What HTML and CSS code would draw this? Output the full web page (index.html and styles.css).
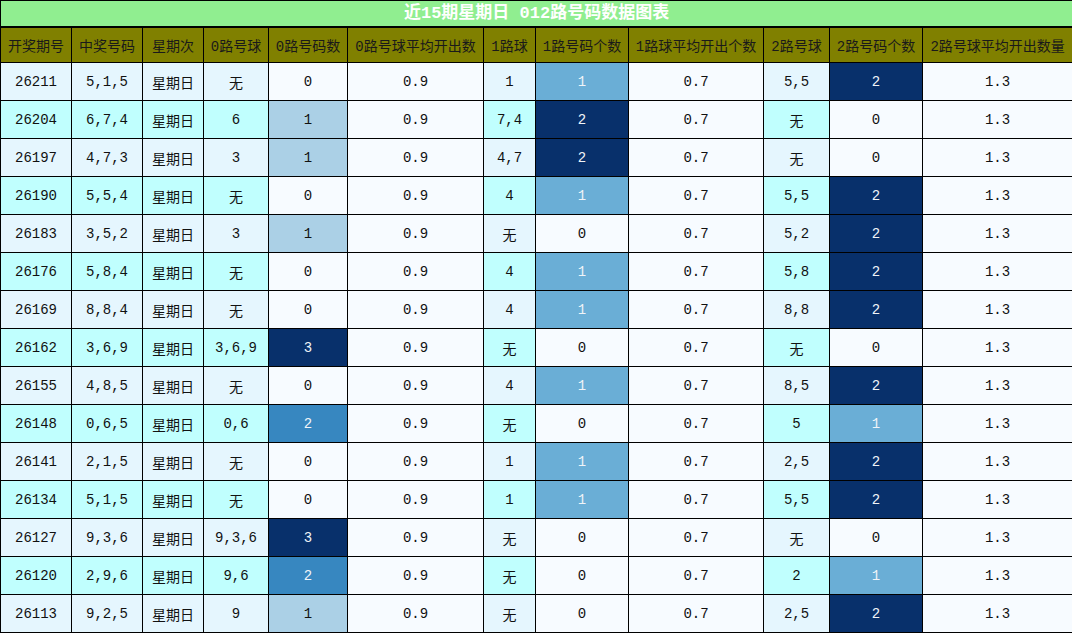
FILE: index.html
```html
<!DOCTYPE html>
<html lang="zh">
<head>
<meta charset="utf-8">
<title>近15期星期日 012路号码数据图表</title>
<link rel="stylesheet" href="styles.css">
</head>
<body>
<table class="chart">
<colgroup>
<col class="w71"><col class="w71"><col class="w61"><col class="w65"><col class="w79"><col class="w136"><col class="w52"><col class="w93"><col class="w135"><col class="w66"><col class="w93"><col class="w150">
</colgroup>
<thead>
<tr><th colspan="12" class="title">近15期星期日 012路号码数据图表</th></tr>
<tr class="head"><th>开奖期号</th><th>中奖号码</th><th>星期次</th><th>0路号球</th><th>0路号码数</th><th>0路号球平均开出数</th><th>1路球</th><th>1路号码个数</th><th>1路球平均开出个数</th><th>2路号球</th><th>2路号码个数</th><th>2路号球平均开出数量</th></tr>
</thead>
<tbody>
<tr class="l"><td class="p">26211</td><td class="p">5,1,5</td><td class="p">星期日</td><td class="p">无</td><td class="n0">0</td><td class="w">0.9</td><td class="p">1</td><td class="b1">1</td><td class="w">0.7</td><td class="p">5,5</td><td class="b2">2</td><td class="w">1.3</td></tr>
<tr class="c"><td class="p">26204</td><td class="p">6,7,4</td><td class="p">星期日</td><td class="p">6</td><td class="a1">1</td><td class="w">0.9</td><td class="p">7,4</td><td class="b2">2</td><td class="w">0.7</td><td class="p">无</td><td class="n0">0</td><td class="w">1.3</td></tr>
<tr class="l"><td class="p">26197</td><td class="p">4,7,3</td><td class="p">星期日</td><td class="p">3</td><td class="a1">1</td><td class="w">0.9</td><td class="p">4,7</td><td class="b2">2</td><td class="w">0.7</td><td class="p">无</td><td class="n0">0</td><td class="w">1.3</td></tr>
<tr class="c"><td class="p">26190</td><td class="p">5,5,4</td><td class="p">星期日</td><td class="p">无</td><td class="n0">0</td><td class="w">0.9</td><td class="p">4</td><td class="b1">1</td><td class="w">0.7</td><td class="p">5,5</td><td class="b2">2</td><td class="w">1.3</td></tr>
<tr class="l"><td class="p">26183</td><td class="p">3,5,2</td><td class="p">星期日</td><td class="p">3</td><td class="a1">1</td><td class="w">0.9</td><td class="p">无</td><td class="n0">0</td><td class="w">0.7</td><td class="p">5,2</td><td class="b2">2</td><td class="w">1.3</td></tr>
<tr class="c"><td class="p">26176</td><td class="p">5,8,4</td><td class="p">星期日</td><td class="p">无</td><td class="n0">0</td><td class="w">0.9</td><td class="p">4</td><td class="b1">1</td><td class="w">0.7</td><td class="p">5,8</td><td class="b2">2</td><td class="w">1.3</td></tr>
<tr class="l"><td class="p">26169</td><td class="p">8,8,4</td><td class="p">星期日</td><td class="p">无</td><td class="n0">0</td><td class="w">0.9</td><td class="p">4</td><td class="b1">1</td><td class="w">0.7</td><td class="p">8,8</td><td class="b2">2</td><td class="w">1.3</td></tr>
<tr class="c"><td class="p">26162</td><td class="p">3,6,9</td><td class="p">星期日</td><td class="p">3,6,9</td><td class="a3">3</td><td class="w">0.9</td><td class="p">无</td><td class="n0">0</td><td class="w">0.7</td><td class="p">无</td><td class="n0">0</td><td class="w">1.3</td></tr>
<tr class="l"><td class="p">26155</td><td class="p">4,8,5</td><td class="p">星期日</td><td class="p">无</td><td class="n0">0</td><td class="w">0.9</td><td class="p">4</td><td class="b1">1</td><td class="w">0.7</td><td class="p">8,5</td><td class="b2">2</td><td class="w">1.3</td></tr>
<tr class="c"><td class="p">26148</td><td class="p">0,6,5</td><td class="p">星期日</td><td class="p">0,6</td><td class="a2">2</td><td class="w">0.9</td><td class="p">无</td><td class="n0">0</td><td class="w">0.7</td><td class="p">5</td><td class="b1">1</td><td class="w">1.3</td></tr>
<tr class="l"><td class="p">26141</td><td class="p">2,1,5</td><td class="p">星期日</td><td class="p">无</td><td class="n0">0</td><td class="w">0.9</td><td class="p">1</td><td class="b1">1</td><td class="w">0.7</td><td class="p">2,5</td><td class="b2">2</td><td class="w">1.3</td></tr>
<tr class="c"><td class="p">26134</td><td class="p">5,1,5</td><td class="p">星期日</td><td class="p">无</td><td class="n0">0</td><td class="w">0.9</td><td class="p">1</td><td class="b1">1</td><td class="w">0.7</td><td class="p">5,5</td><td class="b2">2</td><td class="w">1.3</td></tr>
<tr class="l"><td class="p">26127</td><td class="p">9,3,6</td><td class="p">星期日</td><td class="p">9,3,6</td><td class="a3">3</td><td class="w">0.9</td><td class="p">无</td><td class="n0">0</td><td class="w">0.7</td><td class="p">无</td><td class="n0">0</td><td class="w">1.3</td></tr>
<tr class="c"><td class="p">26120</td><td class="p">2,9,6</td><td class="p">星期日</td><td class="p">9,6</td><td class="a2">2</td><td class="w">0.9</td><td class="p">无</td><td class="n0">0</td><td class="w">0.7</td><td class="p">2</td><td class="b1">1</td><td class="w">1.3</td></tr>
<tr class="l"><td class="p">26113</td><td class="p">9,2,5</td><td class="p">星期日</td><td class="p">9</td><td class="a1">1</td><td class="w">0.9</td><td class="p">无</td><td class="n0">0</td><td class="w">0.7</td><td class="p">2,5</td><td class="b2">2</td><td class="w">1.3</td></tr>
</tbody>
</table>
</body>
</html>
```
FILE: styles.css
```css
html, body {
  margin: 0;
  padding: 0;
  background: #ffffff;
}
.chart {
  width: 1072px;
  border-collapse: collapse;
  table-layout: fixed;
  font-family: "Liberation Mono", "Noto Sans CJK SC", monospace;
  font-size: 14px;
  color: #111111;
}
.w71 { width: 71px; }
.w61 { width: 61px; }
.w65 { width: 65px; }
.w79 { width: 79px; }
.w136 { width: 136px; }
.w52 { width: 52px; }
.w93 { width: 93px; }
.w135 { width: 135px; }
.w66 { width: 66px; }
.w150 { width: 150px; }
.chart th, .chart td {
  border: 1px solid #000;
  padding: 0;
  text-align: center;
  vertical-align: middle;
  white-space: nowrap;
  overflow: hidden;
}
.title {
  height: 25px;
  background: #90ee90;
  color: #ffffff;
  font-size: 17px;
  font-weight: bold;
  border-bottom: 2px solid #000 !important;
  line-height: 24px;
}
.head th {
  height: 34px;
  background: #808000;
  color: #1a1a1a;
  font-weight: normal;
  font-size: 14px;
}
.chart td {
  height: 37px;
}
.l .p { background: #e5f6fe; }
.c .p { background: #c0fffe; }
.w, .n0 { background: #f7fbff; }
.a1 { background: #abd0e6; color: #111; }
.a2 { background: #3787c0; color: #f0f4f8; }
.a3 { background: #08306b; color: #f0f4f8; }
.b1 { background: #6aaed6; color: #f0f4f8; }
.b2 { background: #08306b; color: #f0f4f8; }
```
